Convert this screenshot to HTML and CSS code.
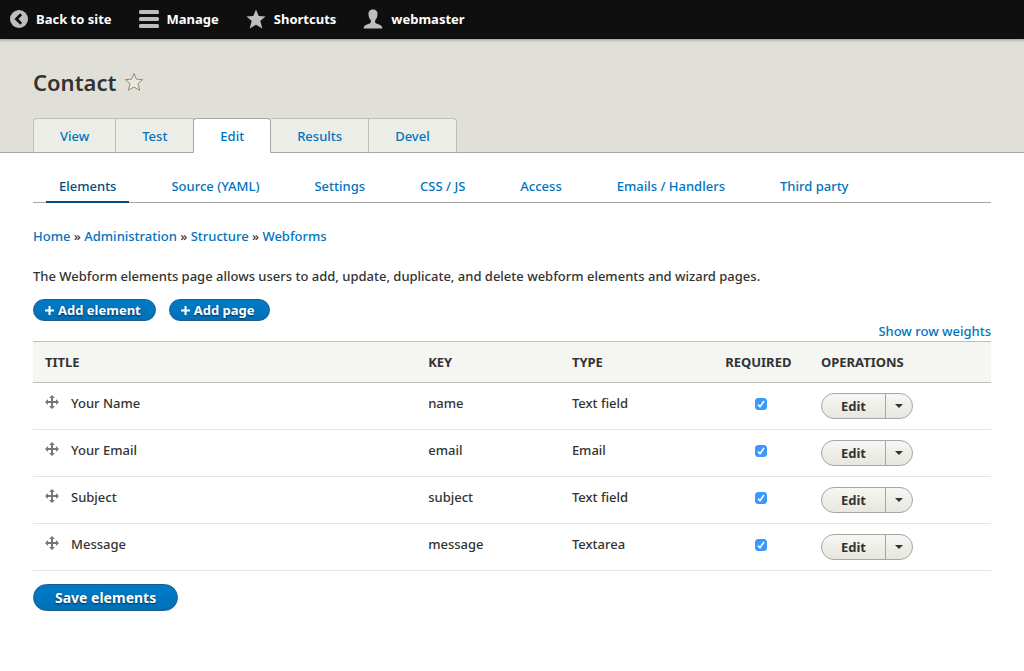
FILE: index.html
```html
<!DOCTYPE html>
<html lang="en">
<head>
  <meta charset="UTF-8">
  <title>Contact</title>
  <meta name="viewport" content="width=device-width, initial-scale=1.0">
  <link rel="stylesheet" href="styles.css">
</head>
<body>
  <svg class="sprite" aria-hidden="true">
    <symbol id="move" viewBox="0 0 14 14">
      <path d="M7 0 L9.5 2.5 V3 H8 V6 H11 V4.5 H11.5 L14 7 L11.5 9.5 H11 V8 H8 V11 H9.5 V11.5 L7 14 L4.5 11.5 V11 H6 V8 H3 V9.5 H2.5 L0 7 L2.5 4.5 H3 V6 H6 V3 H4.5 V2.5 Z"/>
    </symbol>
  </svg>

  <nav class="toolbar">
    <a href="#">
      <svg width="18" height="18" viewBox="0 0 18 18"><circle cx="9" cy="9" r="9" fill="#bebebe"/><path d="M11.2 4.2 L6.4 9 L11.2 13.8" fill="none" stroke="#0f0f0f" stroke-width="2.8"/></svg>
      Back to site
    </a>
    <a href="#">
      <svg width="20" height="20" viewBox="0 0 20 20" fill="#bebebe"><rect y="1" width="20" height="4" rx="1.5"/><rect y="8" width="20" height="4" rx="1.5"/><rect y="15" width="20" height="4" rx="1.5"/></svg>
      Manage
    </a>
    <a href="#">
      <svg width="20" height="20" viewBox="0 0 20 20" fill="#bebebe"><path d="M10 0.5 L12.7 7 L19.6 7.4 L14.3 11.8 L16.3 19.4 L10 15.7 L3.7 19.4 L5.7 11.8 L0.4 7.4 L7.3 7 Z"/></svg>
      Shortcuts
    </a>
    <a href="#">
      <svg width="20" height="20" viewBox="0 0 20 20" fill="#bebebe"><path d="M10 0.5 C12.8 0.5 14.8 2.2 14.5 5.5 C14.3 8 13.6 9.5 12.2 11.2 C11.8 13.2 12.2 14.2 14 14.8 C17 15.7 19 16.5 19.5 19.5 H0.5 C1 16.5 3 15.7 6 14.8 C7.8 14.2 8.2 13.2 7.8 11.2 C6.4 9.5 5.7 8 5.5 5.5 C5.2 2.2 7.2 0.5 10 0.5 Z"/></svg>
      webmaster
    </a>
  </nav>

  <header class="page-header">
    <div class="title-row">
      <h1>Contact</h1>
      <button class="star" aria-label="Add to shortcuts">
        <svg width="20" height="20" viewBox="0 0 20 20"><path d="M10 1.5 L12.4 7.2 L18.6 7.6 L14 11.7 L15.7 18.3 L10 15 L4.3 18.3 L6 11.7 L1.4 7.6 L7.6 7.2 Z" fill="#e9e9e2" stroke="#8f8f78"/></svg>
      </button>
    </div>
    <nav class="tabs">
      <a href="#">View</a>
      <a href="#">Test</a>
      <a href="#" class="active">Edit</a>
      <a href="#">Results</a>
      <a href="#">Devel</a>
    </nav>
  </header>

  <main>
    <nav class="subtabs">
      <a href="#" class="active">Elements</a>
      <a href="#">Source (YAML)</a>
      <a href="#">Settings</a>
      <a href="#">CSS / JS</a>
      <a href="#">Access</a>
      <a href="#">Emails / Handlers</a>
      <a href="#">Third party</a>
    </nav>

    <nav class="breadcrumb">
      <a href="#">Home</a> » <a href="#">Administration</a> » <a href="#">Structure</a> » <a href="#">Webforms</a>
    </nav>

    <p class="help">The Webform elements page allows users to add, update, duplicate, and delete webform elements and wizard pages.</p>

    <div class="actions">
      <button class="primary small"><svg width="9" height="9" viewBox="0 0 9 9"><path d="M0 4.5 H9 M4.5 0 V9"/></svg>Add element</button>
      <button class="primary small"><svg width="9" height="9" viewBox="0 0 9 9"><path d="M0 4.5 H9 M4.5 0 V9"/></svg>Add page</button>
    </div>

    <form>
      <div class="weights"><a href="#">Show row weights</a></div>
      <table>
        <thead>
          <tr>
            <th class="col-title">Title</th>
            <th class="col-key">Key</th>
            <th class="col-type">Type</th>
            <th class="col-required">Required</th>
            <th>Operations</th>
          </tr>
        </thead>
        <tbody>
          <tr>
            <td><span class="item"><svg class="handle" width="14" height="14"><use href="#move"/></svg>Your Name</span></td>
            <td>name</td>
            <td>Text field</td>
            <td class="check"><input type="checkbox" aria-label="Your Name required" checked></td>
            <td><div class="dropbutton"><button type="button">Edit</button><button type="button" class="toggle" aria-label="List additional actions"></button></div></td>
          </tr>
          <tr>
            <td><span class="item"><svg class="handle" width="14" height="14"><use href="#move"/></svg>Your Email</span></td>
            <td>email</td>
            <td>Email</td>
            <td class="check"><input type="checkbox" aria-label="Your Email required" checked></td>
            <td><div class="dropbutton"><button type="button">Edit</button><button type="button" class="toggle" aria-label="List additional actions"></button></div></td>
          </tr>
          <tr>
            <td><span class="item"><svg class="handle" width="14" height="14"><use href="#move"/></svg>Subject</span></td>
            <td>subject</td>
            <td>Text field</td>
            <td class="check"><input type="checkbox" aria-label="Subject required" checked></td>
            <td><div class="dropbutton"><button type="button">Edit</button><button type="button" class="toggle" aria-label="List additional actions"></button></div></td>
          </tr>
          <tr>
            <td><span class="item"><svg class="handle" width="14" height="14"><use href="#move"/></svg>Message</span></td>
            <td>message</td>
            <td>Textarea</td>
            <td class="check"><input type="checkbox" aria-label="Message required" checked></td>
            <td><div class="dropbutton"><button type="button">Edit</button><button type="button" class="toggle" aria-label="List additional actions"></button></div></td>
          </tr>
        </tbody>
      </table>
      <button class="primary save">Save elements</button>
    </form>
  </main>
</body>
</html>
```
FILE: styles.css
```css
* {
  box-sizing: border-box;
}
body {
  margin: 0;
  font-family: "Lucida Grande", "Noto Sans", "Open Sans", sans-serif;
  font-size: 13px;
  font-weight: 500;
  line-height: 20px;
  color: #333;
  background: #fff;
}
a {
  color: #0074bd;
  text-decoration: none;
}
button {
  font: inherit;
  cursor: pointer;
}
svg {
  display: block;
  flex: none;
}
.sprite {
  position: absolute;
  width: 0;
  height: 0;
}

/* Toolbar */
.toolbar {
  display: flex;
  gap: 27px;
  height: 39px;
  padding: 0 10px 1px;
  background: #0f0f0f;
  box-shadow: 0 0 3px 1px rgba(0, 0, 0, 0.33);
  position: relative;
}
.toolbar a {
  display: flex;
  align-items: center;
  gap: 8px;
  color: #fff;
  font-weight: bold;
}

/* Header */
.page-header {
  padding: 27px 33px 0;
  background: #e0e0d8;
  border-bottom: 1px solid #a6a6a6;
}
.title-row {
  display: flex;
  align-items: center;
  gap: 8px;
  height: 32px;
}
h1 {
  margin: 0;
  font-size: 22px;
  line-height: 32px;
  font-weight: 600;
}
.star {
  padding: 0;
  border: 0;
  background: none;
}
.tabs {
  display: flex;
  margin: 20px 0 -1px;
}
.tabs a {
  height: 35px;
  padding: 7px 26px;
  background: #ecede7;
  border: 1px solid #bebfb9;
  border-left-width: 0;
  border-bottom-color: #a6a6a6;
}
.tabs a:first-child {
  border-left-width: 1px;
  border-top-left-radius: 4px;
}
.tabs a:last-child {
  border-top-right-radius: 4px;
}
.tabs .active {
  margin-left: -1px;
  background: #fff;
  border: 1px solid #a6a6a6;
  border-bottom-color: #fff;
  border-radius: 4px 4px 0 0;
}

/* Content */
main {
  padding: 16px 33px 24px;
}
.subtabs {
  display: flex;
  gap: 29px;
  height: 34px;
  padding-left: 13px;
  border-bottom: 1px solid #a6a6a6;
}
.subtabs a {
  height: 34px;
  padding: 7px 13px 0;
}
.subtabs .active {
  color: #004f80;
  border-bottom: 2px solid #004f80;
}
.breadcrumb {
  margin-top: 23px;
}
.help {
  margin: 20px 0 13px;
}
.actions {
  display: flex;
  gap: 13px;
}
.primary {
  display: flex;
  align-items: center;
  justify-content: center;
  color: #fff;
  font-weight: bold;
  text-shadow: 0 1px 2px rgba(0, 0, 0, 0.6);
  background: linear-gradient(#007bc6, #0071b8);
  border: 1px solid #1e5c90;
  border-radius: 20px;
}
.small {
  gap: 4px;
  height: 22px;
  padding: 0 14px 0 11px;
}
.small svg {
  fill: none;
  stroke: #fff;
  stroke-width: 2;
}
.save {
  height: 27px;
  margin-top: 13px;
  padding: 0 21px;
  font-size: 14px;
}
.weights {
  text-align: right;
}

/* Elements table */
table {
  width: 100%;
  table-layout: fixed;
  border-collapse: collapse;
}
th {
  height: 41px;
  padding: 0 12px;
  text-align: left;
  text-transform: uppercase;
  font-weight: bold;
  background: #f5f5f2;
  border: solid #bfbfba;
  border-width: 1px 0;
}
.col-title {
  width: 40%;
}
.col-key {
  width: 15%;
}
.col-type {
  width: 16%;
}
.col-required {
  width: 10%;
}
td {
  height: 47px;
  padding: 10px 12px;
  vertical-align: top;
  border-bottom: 1px solid #e6e4df;
}
.item {
  display: flex;
  gap: 12px;
}
.handle {
  margin-top: 2px;
  fill: #777;
}
.check {
  padding-top: 15px;
}
.check input {
  display: block;
  width: 12px;
  height: 12px;
  margin: 0 auto;
  appearance: none;
  border: 1px solid #3b99fc;
  border-radius: 3px;
}
.check input:checked {
  background: #3b99fc url("data:image/svg+xml,%3Csvg xmlns='http://www.w3.org/2000/svg' viewBox='0 0 12 12'%3E%3Cpath d='M3 6.5 L5 8.8 L9 3' fill='none' stroke='white' stroke-width='1.5'/%3E%3C/svg%3E") center / 12px 12px no-repeat;
}
.dropbutton {
  display: inline-flex;
  height: 26px;
  vertical-align: top;
  overflow: hidden;
  border: 1px solid #a6a6a6;
  border-radius: 20px;
  background: linear-gradient(#f6f6f3, #e7e7df);
}
.dropbutton button {
  padding: 0 19px;
  color: #333;
  font-weight: bold;
  border: 0;
  background: none;
}
.dropbutton .toggle {
  display: flex;
  align-items: center;
  justify-content: center;
  width: 27px;
  padding: 0;
  border-left: 1px solid #a6a6a6;
}
.toggle::after {
  content: "";
  border: 4px solid transparent;
  border-top-color: #333;
  border-bottom-width: 0;
}
```
